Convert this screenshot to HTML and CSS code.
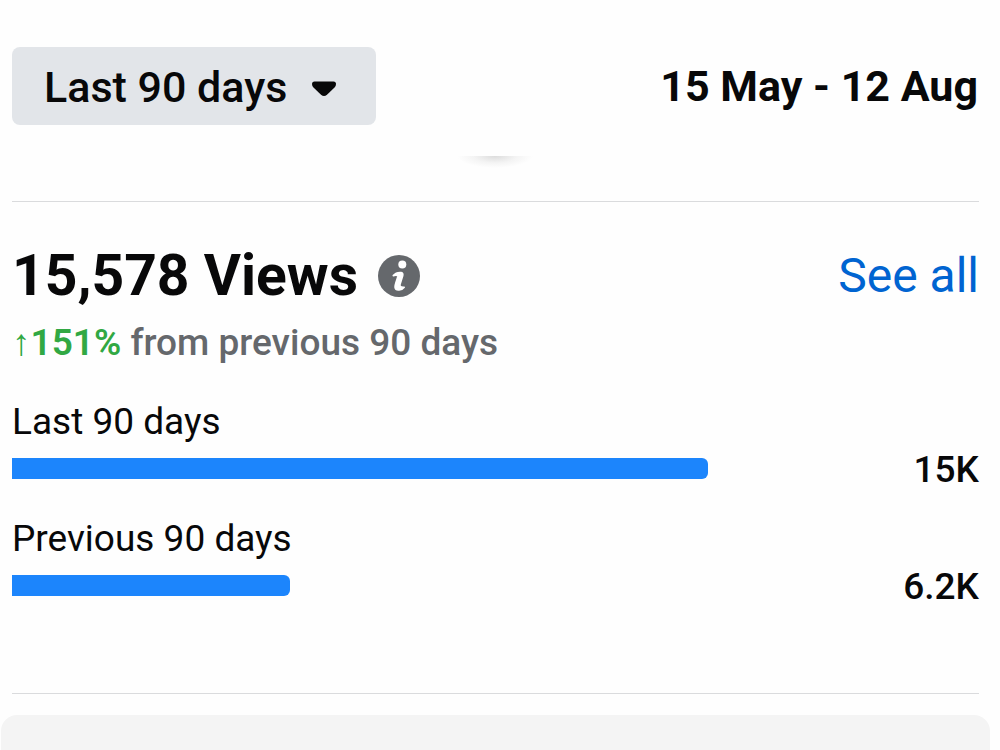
FILE: index.html
```
<!DOCTYPE html>
<html lang="en">
<head>
<meta charset="utf-8">
<meta name="viewport" content="width=device-width, initial-scale=1">
<title>Views</title>
<link rel="stylesheet" href="styles.css">
</head>
<body>
<main class="page">
  <header class="toolbar">
    <div class="period">
      <select class="period-select" aria-label="Period">
        <option>Last 90 days</option>
      </select>
      <svg class="period-caret" viewBox="0 0 26 18" aria-hidden="true"><path d="M3.500 1.500H22.500Q25 1.500 25 4Q25 6 23.500 7.500L16 14.700Q13 17.300 10 14.700L2.500 7.500Q1 6 1 4Q1 1.500 3.500 1.500Z" fill="#080809"/></svg>
    </div>
    <div class="range">15 May - 12 Aug</div>
  </header>
  <div class="shade"></div>
  <section class="views">
    <div class="heading">
      <h1 class="title">15,578 Views</h1>
      <svg class="info" viewBox="0 0 42 42" role="img" aria-label="Info"><circle cx="21" cy="21" r="21" fill="#65686c"/><circle cx="24.300" cy="9.500" r="4" fill="#fff"/><path d="M15.300 20.600C17 18.500 20.500 17.200 23.200 17.500C24.700 17.800 25.100 19 24.700 20.700L22 29.500C21.700 31.200 22.300 32.500 26.200 32.200C24.200 35.100 17.700 36.200 17.100 32.700C16.500 29.500 19.500 24 20.100 20.700Q18.500 20 15.300 20.600Z" fill="#fff" stroke="#fff" stroke-width="1.600" stroke-linejoin="round"/></svg>
      <a class="see-all" href="#">See all</a>
    </div>
    <p class="change"><span class="growth"><span class="arrow">↑</span>151%</span> from previous 90 days</p>
    <div class="chart">
      <div class="entry">
        <div class="entry-label">Last 90 days</div>
        <div class="entry-row"><div class="bar" style="width:72%"></div><div class="value">15K</div></div>
      </div>
      <div class="entry">
        <div class="entry-label">Previous 90 days</div>
        <div class="entry-row"><div class="bar" style="width:28.7%"></div><div class="value">6.2K</div></div>
      </div>
    </div>
  </section>
  <div class="next-card"></div>
</main>
</body>
</html>
```
FILE: styles.css
```
* { box-sizing: border-box; }
body {
  margin: 0;
  background: #fefefe;
  color: #080809;
  font-family: Roboto, "Liberation Sans", sans-serif;
}
.page {
  display: flex;
  flex-direction: column;
  min-height: 100vh;
  padding: 47px 10px 0 0;
}
.toolbar {
  display: flex;
  align-items: center;
  justify-content: space-between;
  margin: 0 12px;
}
.period { position: relative; }
.period-select {
  appearance: none;
  border: 0;
  border-radius: 8px;
  margin: 0;
  padding: 15px 88px 13px 32px;
  background: #e2e5e9;
  color: inherit;
  font: 500 43px/50px Roboto, "Liberation Sans", sans-serif;
  display: block;
}
.period-caret {
  position: absolute;
  right: 39px;
  top: 33px;
  width: 26px;
  height: 18px;
  pointer-events: none;
}
.range {
  font-size: 43px;
  line-height: 50px;
  font-weight: 700;
}
.shade {
  align-self: center;
  width: 76px;
  height: 12px;
  margin: 31px 0 33px;
  background: radial-gradient(ellipse at top, #dcdcdc, #f4f4f4 40%, #fefefe 70%);
}
.views {
  margin: 0 11px 0 12px;
  padding: 41px 0 86px;
  border-top: 1px solid #dadbdd;
  border-bottom: 1px solid #dadbdd;
}
.heading {
  display: flex;
  align-items: center;
}
.title {
  margin: 0;
  font-size: 57px;
  line-height: 66px;
  font-weight: 700;
}
.info {
  width: 42px;
  height: 42px;
  margin-left: 20px;
}
.see-all {
  margin-left: auto;
  color: #0064d1;
  font-size: 48px;
  line-height: 66px;
  text-decoration: none;
}
.change {
  margin: 12px 0 0;
  color: #65686c;
  font-size: 37px;
  line-height: 44px;
  font-weight: 500;
}
.growth { color: #31a843; font-weight: 600; }
.arrow { font-family: "Liberation Sans", sans-serif; font-weight: 400; }
.chart {
  display: grid;
  gap: 27px;
  margin-top: 35px;
}
.entry-label {
  font-size: 37px;
  line-height: 44px;
}
.entry-row {
  display: flex;
  align-items: center;
  height: 44px;
  margin-top: 2px;
}
.bar {
  height: 21px;
  border-radius: 0 6px 6px 0;
  background: #1c85fc;
}
.value {
  margin-left: auto;
  padding-top: 4px;
  font-size: 37px;
  line-height: 44px;
  font-weight: 500;
}
.next-card {
  flex: 1;
  margin: 21px 0 0 1px;
  border-radius: 16px 16px 0 0;
  background: #f4f4f4;
}
```
